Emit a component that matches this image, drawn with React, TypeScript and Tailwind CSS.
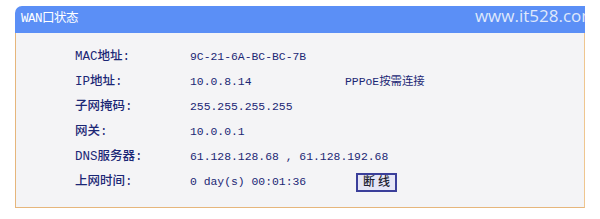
const rows: { label: string; value: string; extra?: "pppoe" | "button" }[] = [
  { label: "MAC地址:", value: "9C-21-6A-BC-BC-7B" },
  { label: "IP地址:", value: "10.0.8.14", extra: "pppoe" },
  { label: "子网掩码:", value: "255.255.255.255" },
  { label: "网关:", value: "10.0.0.1" },
  { label: "DNS服务器:", value: "61.128.128.68 , 61.128.192.68" },
  { label: "上网时间:", value: "0 day(s) 00:01:36", extra: "button" },
];

const font = { fontFamily: '"Liberation Mono", "Noto Sans CJK SC", monospace' };

export default function App() {
  return (
    <div className="w-[600px] h-[219px] bg-white pt-[6px] pl-[15px]">
      <div className="w-[570px] h-[202px] flex flex-col">
        {/* Header */}
        <div className="relative h-[27px] bg-[#5b8ff6] rounded-tl-[7px] flex items-center pl-[6px] overflow-hidden">
          <span
            className="text-white text-[12.5px] leading-none tracking-[-0.5px]"
            style={font}
          >
            WAN口状态
          </span>
          <span
            className="absolute right-[-12px] top-[-3px] text-[17px] text-[#dfe8fb] whitespace-nowrap"
            style={{ fontFamily: '"Open Sans", sans-serif' }}
          >
            www.it528.com
          </span>
        </div>

        {/* Body */}
        <div className="flex-1 bg-[#f4f4f6] border-x border-b border-l-[#e6b67c] border-r-[#efc68f] border-b-[#e6b67c] pt-[12px] pl-[59px]">
          <div
            className="grid grid-cols-[115px_155px_1fr] text-[11.4px] text-[#1b2775] whitespace-nowrap"
            style={font}
          >
            {rows.map((r) => (
              <div key={r.label} className="contents">
                <div className="h-[25px] flex items-center text-[12.5px] font-medium">{r.label}</div>
                <div className="h-[25px] flex items-center">{r.value}</div>
                <div className="h-[25px] flex items-center">
                  {r.extra === "pppoe" && <span>PPPoE按需连接</span>}
                  {r.extra === "button" && (
                    <button className="ml-[11px] w-[41px] h-[19px] border-2 border-[#3b3f9a] bg-[#e6e6f6] text-[#202030] text-[12px] font-medium leading-none tracking-[3px] pl-[3px]">
                      断线
                    </button>
                  )}
                </div>
              </div>
            ))}
          </div>
        </div>
      </div>
    </div>
  );
}
